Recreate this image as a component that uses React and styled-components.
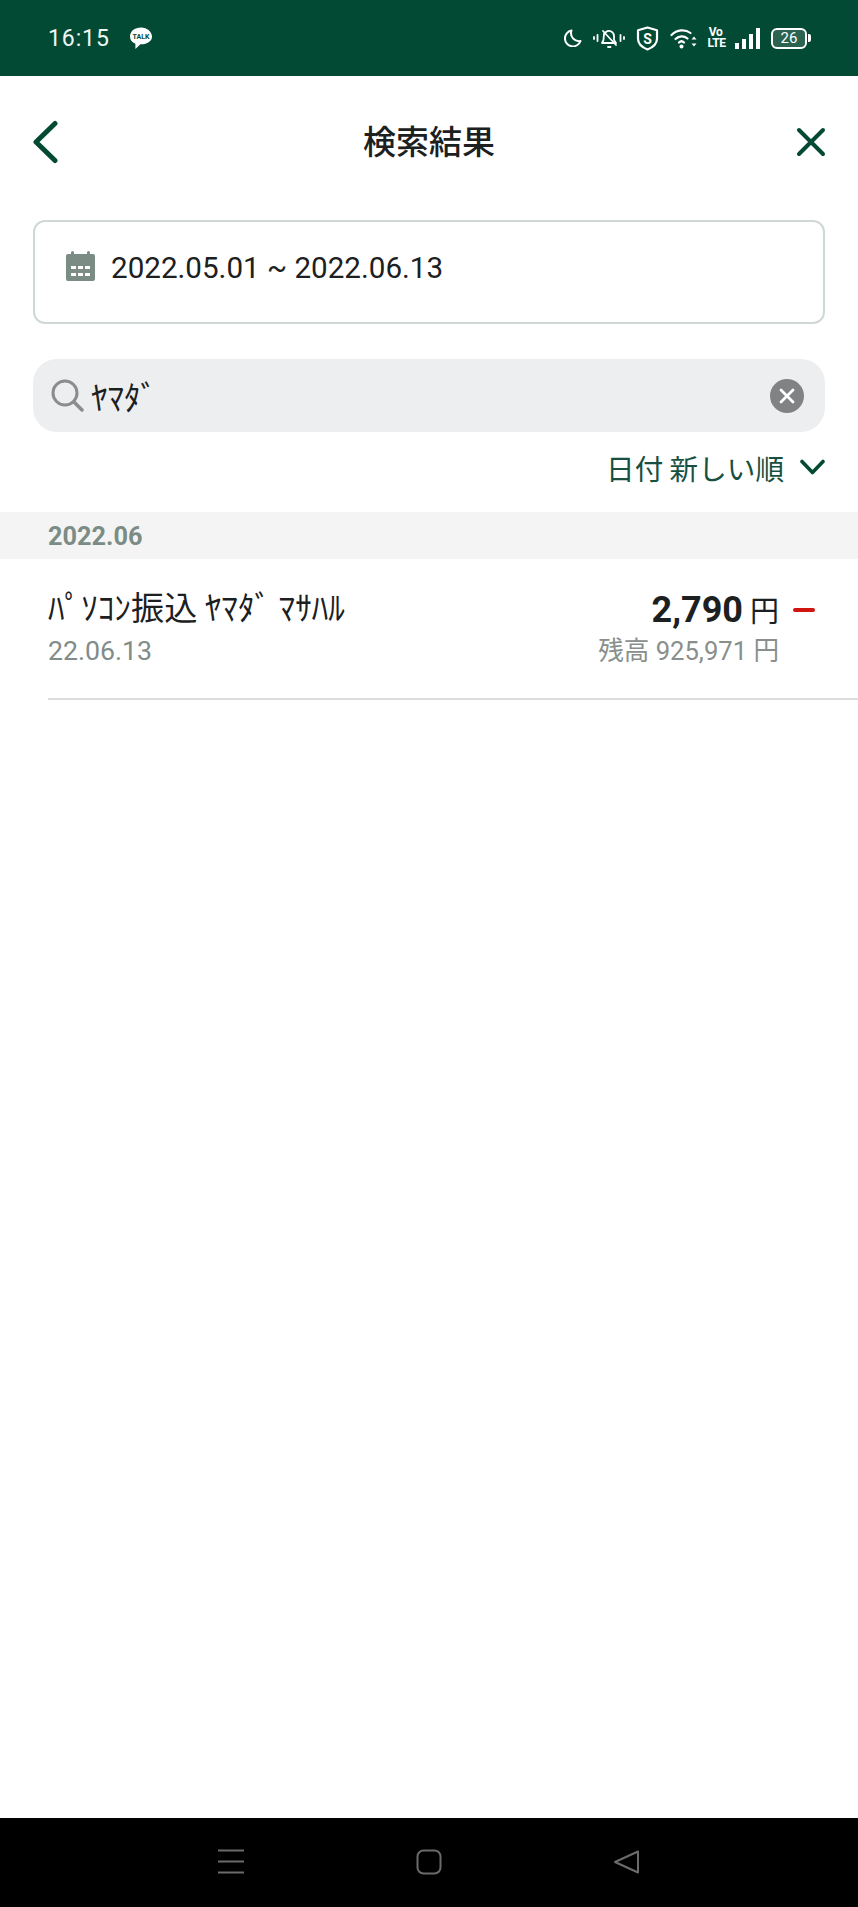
import React from 'react';
import styled, { createGlobalStyle } from 'styled-components';

const GlobalStyle = createGlobalStyle`
  html, body {
    margin: 0;
    padding: 0;
    background: #fff;
  }
  body {
    font-family: Roboto, "Noto Sans CJK JP", sans-serif;
  }
`;

const GREEN = '#024a33';

const App = () => (
  <Page>
    <GlobalStyle />
    <StatusBar>
      <StatusLeft>
        <Clock>16:15</Clock>
        <TalkBubble viewBox="0 0 24 24">
          <path d="M12 1.500C5.600 1.500 1 5.300 1 10.500c0 3.400 2.200 6 5.400 7.200L6.400 23l5-4.700h.6c6.400 0 11-3.200 11-7.800S18.400 1.500 12 1.500z" fill="#fff" />
          <text x="12" y="13" textAnchor="middle" fontSize="7" fontWeight="700" fill={GREEN} fontFamily="Roboto, sans-serif" textLength="17">TALK</text>
        </TalkBubble>
      </StatusLeft>
      <StatusRight>
        <StatusIcon width="18" height="18" viewBox="0 0 18 18">
          <path d="M7.500 1.500A8 8 0 1 0 16.500 12 8 8 0 0 1 7.500 1.500z" fill="none" stroke="#fff" strokeWidth="2" strokeLinejoin="round" />
        </StatusIcon>
        <StatusIcon width="32" height="24" viewBox="0 0 32 24">
          <g stroke="#fff" strokeWidth="1.800" fill="none" strokeLinecap="round" strokeLinejoin="round">
            <path d="M1 11v2M4.500 9v6M27.500 9v6M31 11v2" />
            <path d="M9 17h14l-2-3v-4a5 5 0 0 0-8-4l-2 2-.5 6z" />
            <path d="M10 5l13 14" />
            <path d="M15 21h2.500" />
          </g>
        </StatusIcon>
        <StatusIcon width="23" height="25" viewBox="0 0 23 25">
          <path d="M11.500 1.500l9.500 2.800v8.500c0 5.200-4.200 8.600-9.500 10.700C6.200 21.400 2 18 2 12.800V4.300z" fill="none" stroke="#fff" strokeWidth="2.200" strokeLinejoin="round" />
          <text x="11.500" y="17.500" textAnchor="middle" fontSize="14" fontWeight="700" fill="#fff" fontFamily="Roboto, sans-serif">S</text>
        </StatusIcon>
        <StatusIcon width="27" height="21" viewBox="0 0 27 21">
          <g stroke="#fff" strokeWidth="2.200" fill="none" strokeLinecap="round">
            <path d="M1.500 7C7 1.500 15 .8 20.500 5" />
            <path d="M5.500 11C9 7.500 14 7.500 17.500 10.500" />
            <path d="M9 14.500c1.500-1.500 3.500-1.500 5 0" />
          </g>
          <circle cx="11.500" cy="18.500" r="2" fill="#fff" />
          <path d="M24 8.500l2.500 3h-5zM24 18.500l-2.500-3h5z" fill="#fff" />
        </StatusIcon>
        <VoLte>Vo<br />LTE</VoLte>
        <Signal>
          {[6, 10, 15, 21].map((h) => (
            <SignalBar key={h} $h={h} />
          ))}
        </Signal>
        <Battery>
          <BatteryBody>26</BatteryBody>
          <BatteryCap />
        </Battery>
      </StatusRight>
    </StatusBar>

    <Content>
      <Header>
        <IconButton viewBox="0 0 28 44" width="28" height="44">
          <path d="M24 3.500L5 22l19 18.500" fill="none" stroke={GREEN} strokeWidth="5" strokeLinecap="round" strokeLinejoin="round" />
        </IconButton>
        <Title>検索結果</Title>
        <IconButton viewBox="0 0 30 30" width="30" height="30">
          <path d="M3 3l24 24M27 3L3 27" stroke={GREEN} strokeWidth="4" strokeLinecap="round" fill="none" />
        </IconButton>
      </Header>

      <DateBox>
        <svg width="29" height="30" viewBox="0 0 29 30">
          <path d="M2 3h25a2 2 0 0 1 2 2v23a2 2 0 0 1-2 2H2a2 2 0 0 1-2-2V5a2 2 0 0 1 2-2z" fill="#7b8c85" />
          <rect x="5" y="0" width="3" height="6" rx="1.500" fill="#7b8c85" />
          <rect x="21" y="0" width="3" height="6" rx="1.500" fill="#7b8c85" />
          <g fill="#fff">
            <rect x="5" y="15" width="5" height="3" />
            <rect x="12" y="15" width="5" height="3" />
            <rect x="19" y="15" width="5" height="3" />
            <rect x="5" y="22" width="5" height="3" />
            <rect x="12" y="22" width="5" height="3" />
            <rect x="19" y="22" width="5" height="3" />
          </g>
        </svg>
        <DateText>2022.05.01 ~ 2022.06.13</DateText>
      </DateBox>

      <SearchBox>
        <svg width="33" height="33" viewBox="0 0 33 33">
          <circle cx="14" cy="14" r="12" fill="none" stroke="#8a8c8d" strokeWidth="3" />
          <path d="M23 23l8 8" stroke="#8a8c8d" strokeWidth="3.500" strokeLinecap="round" />
        </svg>
        <SearchText>ﾔﾏﾀﾞ</SearchText>
        <ClearButton>
          <svg width="16" height="16" viewBox="0 0 16 16">
            <path d="M2 2l12 12M14 2L2 14" stroke="#fff" strokeWidth="2.800" strokeLinecap="round" />
          </svg>
        </ClearButton>
      </SearchBox>

      <SortRow>
        <SortLabel>日付 新しい順</SortLabel>
        <svg width="25" height="16" viewBox="0 0 25 16">
          <path d="M2 2.500l10.500 11L23 2.500" fill="none" stroke={GREEN} strokeWidth="3.600" strokeLinecap="round" strokeLinejoin="round" />
        </svg>
      </SortRow>

      <MonthBar>2022.06</MonthBar>

      <Row>
        <RowLeft>
          <RowTitle>ﾊﾟｿｺﾝ振込 ﾔﾏﾀﾞ ﾏｻﾊﾙ</RowTitle>
          <RowDate>22.06.13</RowDate>
        </RowLeft>
        <RowRight>
          <AmountLine>
            <Amount>2,790</Amount>
            <Yen>円</Yen>
            <MinusMark />
          </AmountLine>
          <Balance>残高 925,971 円</Balance>
        </RowRight>
      </Row>
    </Content>

    <NavBar>
      <svg width="26" height="25" viewBox="0 0 26 25">
        <path d="M0 1.500h26M0 12.500h26M0 23.500h26" stroke="#6b6b6b" strokeWidth="2" />
      </svg>
      <svg width="26" height="26" viewBox="0 0 26 26">
        <rect x="1.500" y="1.500" width="23" height="23" rx="6" fill="none" stroke="#6b6b6b" strokeWidth="2" />
      </svg>
      <svg width="26" height="26" viewBox="0 0 26 26">
        <path d="M24 2.500v21L1 13z" fill="none" stroke="#6b6b6b" strokeWidth="2" strokeLinejoin="round" />
      </svg>
    </NavBar>
  </Page>
);

const Page = styled.div`
  width: 858px;
  height: 1907px;
  display: flex;
  flex-direction: column;
  background: #fff;
  overflow: hidden;
`;

const StatusBar = styled.div`
  height: 76px;
  flex: none;
  background: ${GREEN};
  display: flex;
  align-items: center;
  justify-content: space-between;
  padding: 0 47px 0 48px;
  color: #fff;
`;

const StatusLeft = styled.div`
  display: flex;
  align-items: center;
  gap: 19px;
`;

const Clock = styled.div`
  font-size: 23px;
  letter-spacing: 0.9px;
  color: #eef6f2;
`;

const TalkBubble = styled.svg`
  width: 24px;
  height: 24px;
`;

const StatusRight = styled.div`
  display: flex;
  align-items: center;
  gap: 11px;
`;

const StatusIcon = styled.svg`
  flex: none;
`;

const VoLte = styled.div`
  width: 16px;
  font-size: 12px;
  line-height: 11px;
  font-weight: 700;
  text-align: center;
  letter-spacing: -0.4px;
`;

const Signal = styled.div`
  display: flex;
  align-items: flex-end;
  gap: 3.500px;
  height: 21px;
  padding: 0 0.500px;
`;

const SignalBar = styled.div`
  width: 3.500px;
  height: ${({ $h }) => $h}px;
  background: #fff;
`;

const Battery = styled.div`
  display: flex;
  align-items: center;
  gap: 1px;
`;

const BatteryBody = styled.div`
  width: 32px;
  height: 17px;
  border: 2px solid #fff;
  border-radius: 6px;
  font-size: 15px;
  line-height: 17px;
  text-align: center;
  background: #2b6250;
`;

const BatteryCap = styled.div`
  width: 3px;
  height: 8px;
  background: #fff;
  border-radius: 0 2px 2px 0;
`;

const Content = styled.div`
  flex: 1;
  display: flex;
  flex-direction: column;
`;

const Header = styled.div`
  height: 144px;
  flex: none;
  box-sizing: border-box;
  padding: 0 32px 13px 31px;
  display: flex;
  align-items: center;
  justify-content: space-between;
`;

const IconButton = styled.svg`
  flex: none;
`;

const Title = styled.h1`
  margin: 0 0 4px 3px;
  font-size: 33px;
  font-weight: 500;
  color: #1c2020;
  font-family: "Noto Sans CJK JP", sans-serif;
`;

const DateBox = styled.div`
  height: 104px;
  flex: none;
  box-sizing: border-box;
  margin: 0 33px;
  padding: 29px 31px 0;
  display: flex;
  align-items: flex-start;
  gap: 16px;
  border: 2px solid #d0d8d5;
  border-radius: 12px;
`;

const DateText = styled.div`
  font-size: 29.6px;
  line-height: 34px;
  color: #1c2020;
`;

const SearchBox = styled.div`
  height: 73px;
  flex: none;
  margin: 35px 33px 0;
  padding: 0 21px 0 18px;
  display: flex;
  align-items: center;
  background: #edeeef;
  border-radius: 24px;
`;

const SearchText = styled.div`
  flex: 1;
  margin-left: 7px;
  font-size: 33px;
  color: #1c2020;
  font-family: "Noto Sans CJK JP", sans-serif;
`;

const ClearButton = styled.div`
  width: 34px;
  height: 34px;
  border-radius: 50%;
  background: #808283;
  display: flex;
  align-items: center;
  justify-content: center;
`;

const SortRow = styled.div`
  height: 80px;
  flex: none;
  box-sizing: border-box;
  padding: 0 33px 10px 0;
  display: flex;
  align-items: center;
  justify-content: flex-end;
  gap: 16px;
`;

const SortLabel = styled.div`
  font-size: 28.6px;
  color: #17503f;
  font-family: "Noto Sans CJK JP", sans-serif;
`;

const MonthBar = styled.div`
  height: 47px;
  flex: none;
  box-sizing: border-box;
  padding: 2px 0 0 48px;
  display: flex;
  align-items: center;
  background: #f4f4f4;
  font-size: 25.3px;
  font-weight: 700;
  color: #7b8c85;
`;

const Row = styled.div`
  margin-left: 48px;
  height: 141px;
  flex: none;
  box-sizing: border-box;
  padding: 28px 43px 0 0;
  display: flex;
  justify-content: space-between;
  border-bottom: 2px solid #dcdcdc;
`;

const RowLeft = styled.div`
  display: flex;
  flex-direction: column;
`;

const RowTitle = styled.div`
  font-size: 33.2px;
  line-height: 38px;
  color: #1c2020;
  font-family: "Noto Sans CJK JP", sans-serif;
`;

const RowDate = styled.div`
  margin-top: 10px;
  font-size: 26.7px;
  line-height: 32px;
  color: #818b88;
`;

const RowRight = styled.div`
  display: flex;
  flex-direction: column;
  align-items: flex-end;
`;

const AmountLine = styled.div`
  display: flex;
  align-items: baseline;
  gap: 7px;
  line-height: 42px;
  padding-top: 1px;
`;

const Amount = styled.div`
  font-size: 36px;
  font-weight: 700;
  color: #1c2020;
`;

const Yen = styled.div`
  font-size: 29px;
  color: #1c2020;
  font-family: "Noto Sans CJK JP", sans-serif;
`;

const MinusMark = styled.div`
  width: 22px;
  height: 4px;
  margin-left: 7px;
  background: #d0140f;
  border-radius: 2px;
  align-self: center;
`;

const Balance = styled.div`
  margin-top: 3px;
  margin-right: 36px;
  font-size: 25.6px;
  line-height: 34px;
  color: #888f8c;
`;

const NavBar = styled.div`
  height: 89px;
  flex: none;
  background: #000;
  display: flex;
  align-items: center;
  justify-content: center;
  gap: 172px;
  padding-bottom: 2px;
  box-sizing: border-box;
`;

export default App;
